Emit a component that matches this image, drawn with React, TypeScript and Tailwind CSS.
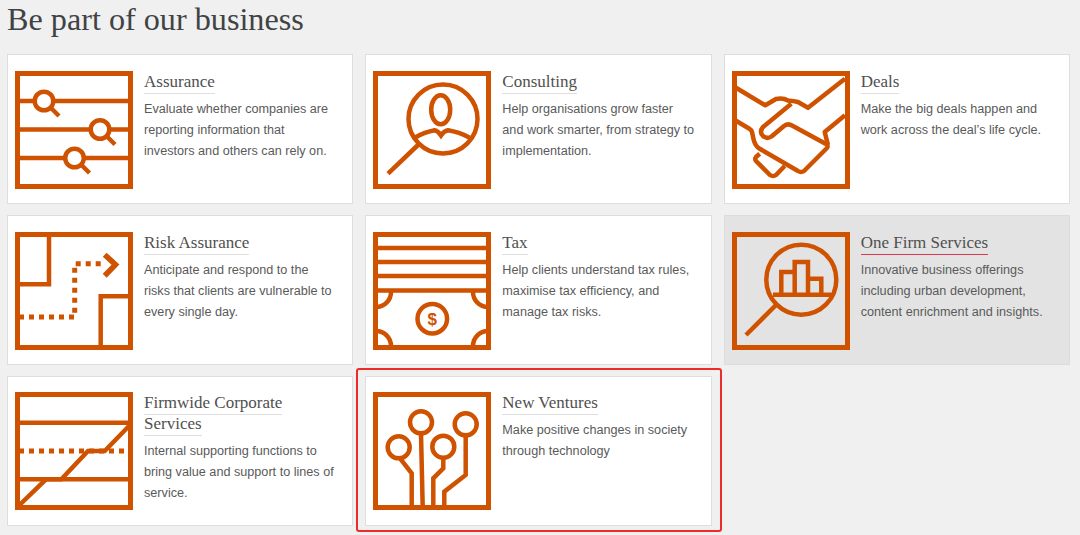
import React from "react";

const C = "#cf5200";

const Frame = ({ children }: { children?: React.ReactNode }) => (
  <svg width="118" height="118" viewBox="0 0 118 118" fill="none" stroke={C} strokeWidth="4.5" className="shrink-0">
    {children}
    <rect x="2.5" y="2.5" width="113" height="113" strokeWidth="5" fill="none" />
  </svg>
);

const Assurance = () => (
  <Frame>
    <path d="M3 30H115M3 58.5H115M3 87H115" />
    {[[29, 30], [85, 58.5], [59.5, 87]].map(([x, y]) => (
      <g key={x}>
        <circle cx={x} cy={y} r="9.3" fill="#fff" strokeWidth="4.5" />
        <path d={`M${x + 7} ${y + 7}L${x + 15} ${y + 15}`} strokeWidth="4.5" />
      </g>
    ))}
  </Frame>
);

const Consulting = () => (
  <Frame>
    <circle cx="70" cy="48" r="34.5" strokeWidth="4.5" />
    <ellipse cx="67.7" cy="38.7" rx="9.5" ry="14.5" strokeWidth="4.5" />
    <path d="M41.7 66.7Q52 61 61.7 59.3Q65 60 68 64.5Q71 60 75 59.3Q86 61 96.7 66.7" strokeWidth="4.5" />
    <path d="M45 74L15 102.7" strokeWidth="4.5" />
  </Frame>
);

const Deals = () => (
  <Frame>
    <g strokeWidth="4.5" strokeLinejoin="round">
      <path d="M2.7 16L33.3 34.3L44 28Q51 26.5 56 29.5Q62 30 66 31L76 36.7L113 7.7" />
      <path d="M59.3 32.7L31 56Q27 61 31 65Q35 68.5 39.5 65.5L52 55Q56 52 60 54.5L94 73Q97 75 94.5 77.5L72 100Q69 102 66 100L27.7 77.7Q23 75 21.5 68L20 61Q19.5 59 17 57.5L2.7 49" />
      <path d="M113 44.3L92.7 61L96 74" />
      <path d="M27.7 82.7L24 86Q22.5 88 24 90L38 104Q41 106 44 104L52.7 95" />
    </g>
  </Frame>
);

const Risk = () => (
  <Frame>
    <path d="M34 3V52.3H3M115 64.3H85.7V115" />
    <path d="M4 85H59.7V31.7H86" strokeWidth="5" strokeDasharray="5 5" />
    <path d="M89.7 22.7L100.5 32.7L89.7 43.7" strokeWidth="5.5" />
  </Frame>
);

const Tax = () => (
  <Frame>
    <path d="M3 16H115M3 30H115M3 44H115M3 58.5H115" />
    <path d="M18 60A15 15 0 0 1 3 75M100 60A15 15 0 0 0 115 75M3 99A15 15 0 0 1 18 114M115 99A15 15 0 0 0 100 114" />
    <circle cx="59.3" cy="86.7" r="14.8" strokeWidth="4.5" />
    <text x="59.3" y="92.8" textAnchor="middle" fontSize="17" fontWeight="700" fill={C} stroke="none" fontFamily="'Liberation Sans', sans-serif">$</text>
  </Frame>
);

const OneFirm = () => (
  <Frame>
    <g strokeWidth="4.5">
      <circle cx="69.3" cy="47.7" r="35" />
      <path d="M41 62.7H99" />
      <path d="M49.3 62.7V40H62.7M62.7 62.7V30H76V62.7M76 46.7H89.3V62.7" />
      <path d="M44 73L14 103" />
    </g>
  </Frame>
);

const Firmwide = () => (
  <Frame>
    <path d="M3 30.7H115M3 87.3H115" strokeWidth="4.5" />
    <path d="M4 59H114" strokeWidth="5" strokeDasharray="5 5" />
    <path d="M3.5 114L31 87.3H46.3L73 59H89.7L114 34" strokeWidth="4.5" />
  </Frame>
);

const Ventures = () => (
  <Frame>
    <g strokeWidth="4.5">
      <circle cx="25.7" cy="55.3" r="11" />
      <circle cx="48" cy="30.3" r="11" />
      <circle cx="70.3" cy="54.7" r="11" />
      <circle cx="92.7" cy="32.3" r="11" />
      <path d="M27 66.3L38.7 81.3V115M48 41.5L49.7 115M70.3 65.7V76.3L60.3 86.3V115M92.7 43.5V83L71.3 99.7V115" />
    </g>
  </Frame>
);

const cards = [
  { t: "Assurance", d: ["Evaluate whether companies are", "reporting information that", "investors and others can rely on."], I: Assurance },
  { t: "Consulting", d: ["Help organisations grow faster", "and work smarter, from strategy to", "implementation."], I: Consulting },
  { t: "Deals", d: ["Make the big deals happen and", "work across the deal’s life cycle."], I: Deals },
  { t: "Risk Assurance", d: ["Anticipate and respond to the", "risks that clients are vulnerable to", "every single day."], I: Risk },
  { t: "Tax", d: ["Help clients understand tax rules,", "maximise tax efficiency, and", "manage tax risks."], I: Tax },
  { t: "One Firm Services", d: ["Innovative business offerings", "including urban development,", "content enrichment and insights."], I: OneFirm, active: true },
  { t: "Firmwide Corporate Services", d: ["Internal supporting functions to", "bring value and support to lines of", "service."], I: Firmwide, last: true },
  { t: "New Ventures", d: ["Make positive changes in society", "through technology"], I: Ventures, last: true },
];

export default function App() {
  return (
    <div className="relative h-[535px] w-[1080px] overflow-hidden bg-[#f0f0f0] pl-[7px] font-['Liberation_Sans',sans-serif]">
      <h1 className="h-[54px] font-['Liberation_Serif',serif] text-[32.2px] leading-[38px] text-[#404345]">
        Be part of our business
      </h1>
      <div className="grid w-[1063px] grid-cols-3 gap-x-[12px] gap-y-[11px]">
        {cards.map(({ t, d, I, active, last }) => (
          <div
            key={t}
            className={`flex h-[150px] items-start border pl-[7px] ${last ? "pt-[15px]" : "pt-[16px]"} ${active ? "border-[#dcdcdc] bg-[#e3e3e3]" : "border-[#dedede] bg-white"}`}
          >
            <I />
            <div className="ml-[11px] min-w-0 flex-1 pr-2">
              <h2 className="max-w-[190px] font-['Liberation_Serif',serif] text-[17px] leading-[21px] text-[#505050]">
                <span className={`border-b pb-[2px] ${active ? "border-[#d93954]" : "border-[#dfdfdf]"}`}>{t}</span>
              </h2>
              <p className="mt-[7px] text-[12.65px] leading-[21px] text-[#5a5a5a]">
                {d.map((l) => (
                  <span key={l} className="block whitespace-nowrap">{l}</span>
                ))}
              </p>
            </div>
          </div>
        ))}
      </div>
      <div className="pointer-events-none absolute left-[356px] top-[368px] h-[164px] w-[366px] rounded-[3px] border-2 border-[#ee2a2a]" />
    </div>
  );
}
